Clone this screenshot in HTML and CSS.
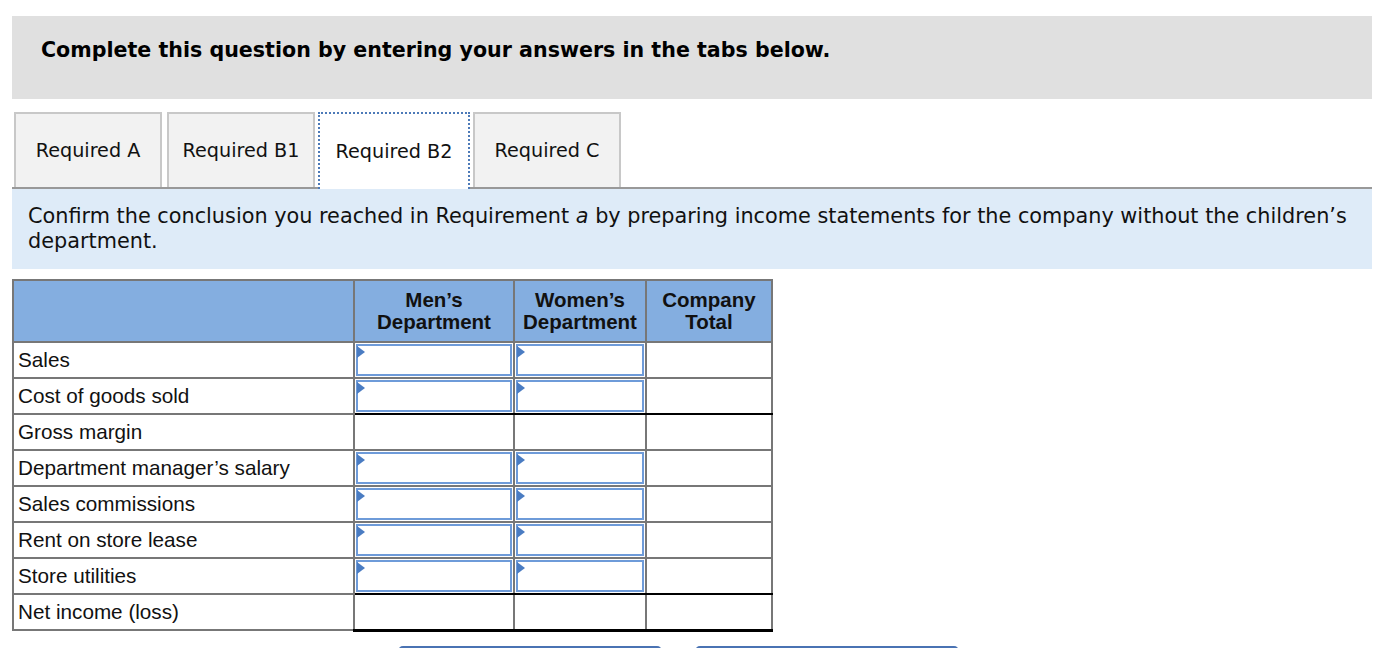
FILE: index.html
```html
<!DOCTYPE html>
<html>
<head>
<meta charset="utf-8">
<link rel="stylesheet" href="styles.css">
</head>
<body>
<div class="page">
  <div class="banner">Complete this question by entering your answers in the tabs below.</div>
  <div class="tabs">
    <div class="tab">Required A</div>
    <div class="tab">Required B1</div>
    <div class="tab active">Required B2</div>
    <div class="tab">Required C</div>
  </div>
  <div class="prompt">Confirm the conclusion you reached in Requirement <i>a</i> by preparing income statements for the company without the children’s department.</div>
  <table class="grid">
    <colgroup>
      <col class="c-label"><col class="c-men"><col class="c-women"><col class="c-total">
    </colgroup>
    <thead>
      <tr>
        <th></th>
        <th>Men’s<br>Department</th>
        <th>Women’s<br>Department</th>
        <th>Company<br>Total</th>
      </tr>
    </thead>
    <tbody>
      <tr><td class="label">Sales</td><td class="in"><div class="box"></div></td><td class="in"><div class="box"></div></td><td></td></tr>
      <tr class="pre"><td class="label">Cost of goods sold</td><td class="in"><div class="box"></div></td><td class="in"><div class="box"></div></td><td></td></tr>
      <tr><td class="label">Gross margin</td><td></td><td></td><td></td></tr>
      <tr><td class="label">Department manager’s salary</td><td class="in"><div class="box"></div></td><td class="in"><div class="box"></div></td><td></td></tr>
      <tr><td class="label">Sales commissions</td><td class="in"><div class="box"></div></td><td class="in"><div class="box"></div></td><td></td></tr>
      <tr><td class="label">Rent on store lease</td><td class="in"><div class="box"></div></td><td class="in"><div class="box"></div></td><td></td></tr>
      <tr class="pre"><td class="label">Store utilities</td><td class="in"><div class="box"></div></td><td class="in"><div class="box"></div></td><td></td></tr>
      <tr class="total"><td class="label">Net income (loss)</td><td></td><td></td><td></td></tr>
    </tbody>
  </table>
  <div class="nav">
    <button class="navbtn">&lt; Required B1</button>
    <button class="navbtn">Required C &gt;</button>
  </div>
</div>
</body>
</html>
```

FILE: styles.css
```css
html, body {
  margin: 0;
  padding: 0;
  background: #fff;
  overflow: hidden;
}
.page {
  width: 1360px;
  margin: 16px 0 0 12px;
  font-family: "DejaVu Sans", Verdana, sans-serif;
  color: #111;
}
.banner {
  height: 83px;
  box-sizing: border-box;
  background: #e0e0e0;
  padding: 20px 29px 0;
  font-weight: bold;
  font-size: 20.6px;
  line-height: 28px;
  color: #000;
}
.tabs {
  margin-top: 13px;
  display: flex;
  gap: 5px;
  padding-left: 2px;
  border-bottom: 2px solid #999;
  height: 75px;
}
.tab {
  width: 148px;
  height: 75px;
  box-sizing: border-box;
  border: 2px solid #c8c8c8;
  border-bottom: none;
  background: #f2f2f2;
  display: flex;
  align-items: center;
  justify-content: center;
  font-size: 19.2px;
  color: #111;
}
.tab.active {
  width: 152px;
  background: #fff;
  border: 2px dotted #4d7ab8;
  border-bottom: none;
  height: 77px;
  margin-left: -2px;
  margin-right: -2px;
  position: relative;
  z-index: 1;
}
.prompt {
  background: #deebf8;
  padding: 15px 16px 15px;
  font-size: 20.8px;
  line-height: 25px;
  color: #111;
}
.grid {
  margin-top: 10px;
  border-collapse: collapse;
  font-family: "Liberation Sans", Arial, sans-serif;
  font-size: 20.7px;
  color: #111;
}
.c-label { width: 341px; }
.c-men { width: 160px; }
.c-women { width: 132px; }
.c-total { width: 126px; }
.grid th, .grid td {
  border: 2px solid #777;
  padding: 0;
}
.grid th {
  background: #84aee0;
  height: 60px;
  font-size: 20.5px;
  font-weight: bold;
  line-height: 22px;
  text-align: center;
  vertical-align: middle;
}
.grid tr {
  height: 36px;
}
.grid td {
  background: #fff;
  line-height: 22px;
}
.grid td.label {
  padding-left: 4px;
  vertical-align: middle;
}
.grid td.in {
  padding: 1px;
}
.box {
  position: relative;
  height: 32px;
  box-sizing: border-box;
  border: 2px solid #6e9bd9;
}
.box::before {
  content: "";
  position: absolute;
  left: -1px;
  top: 0;
  border-top: 6px solid transparent;
  border-bottom: 6px solid transparent;
  border-left: 8px solid #4a7cc2;
}
.grid tr.pre td:not(.label) {
  border-bottom: 2px solid #000;
}
.grid tr.total td:not(.label) {
  border-bottom: 3px solid #000;
}
.nav {
  display: flex;
  gap: 33px;
  margin-top: 14px;
  padding-left: 386px;
}
.navbtn {
  width: 264px;
  height: 42px;
  border: 3px solid #4a73b3;
  border-radius: 5px;
  background: #fff;
  font-family: "DejaVu Sans", Verdana, sans-serif;
  font-size: 16px;
  color: #4a73b3;
}
```
